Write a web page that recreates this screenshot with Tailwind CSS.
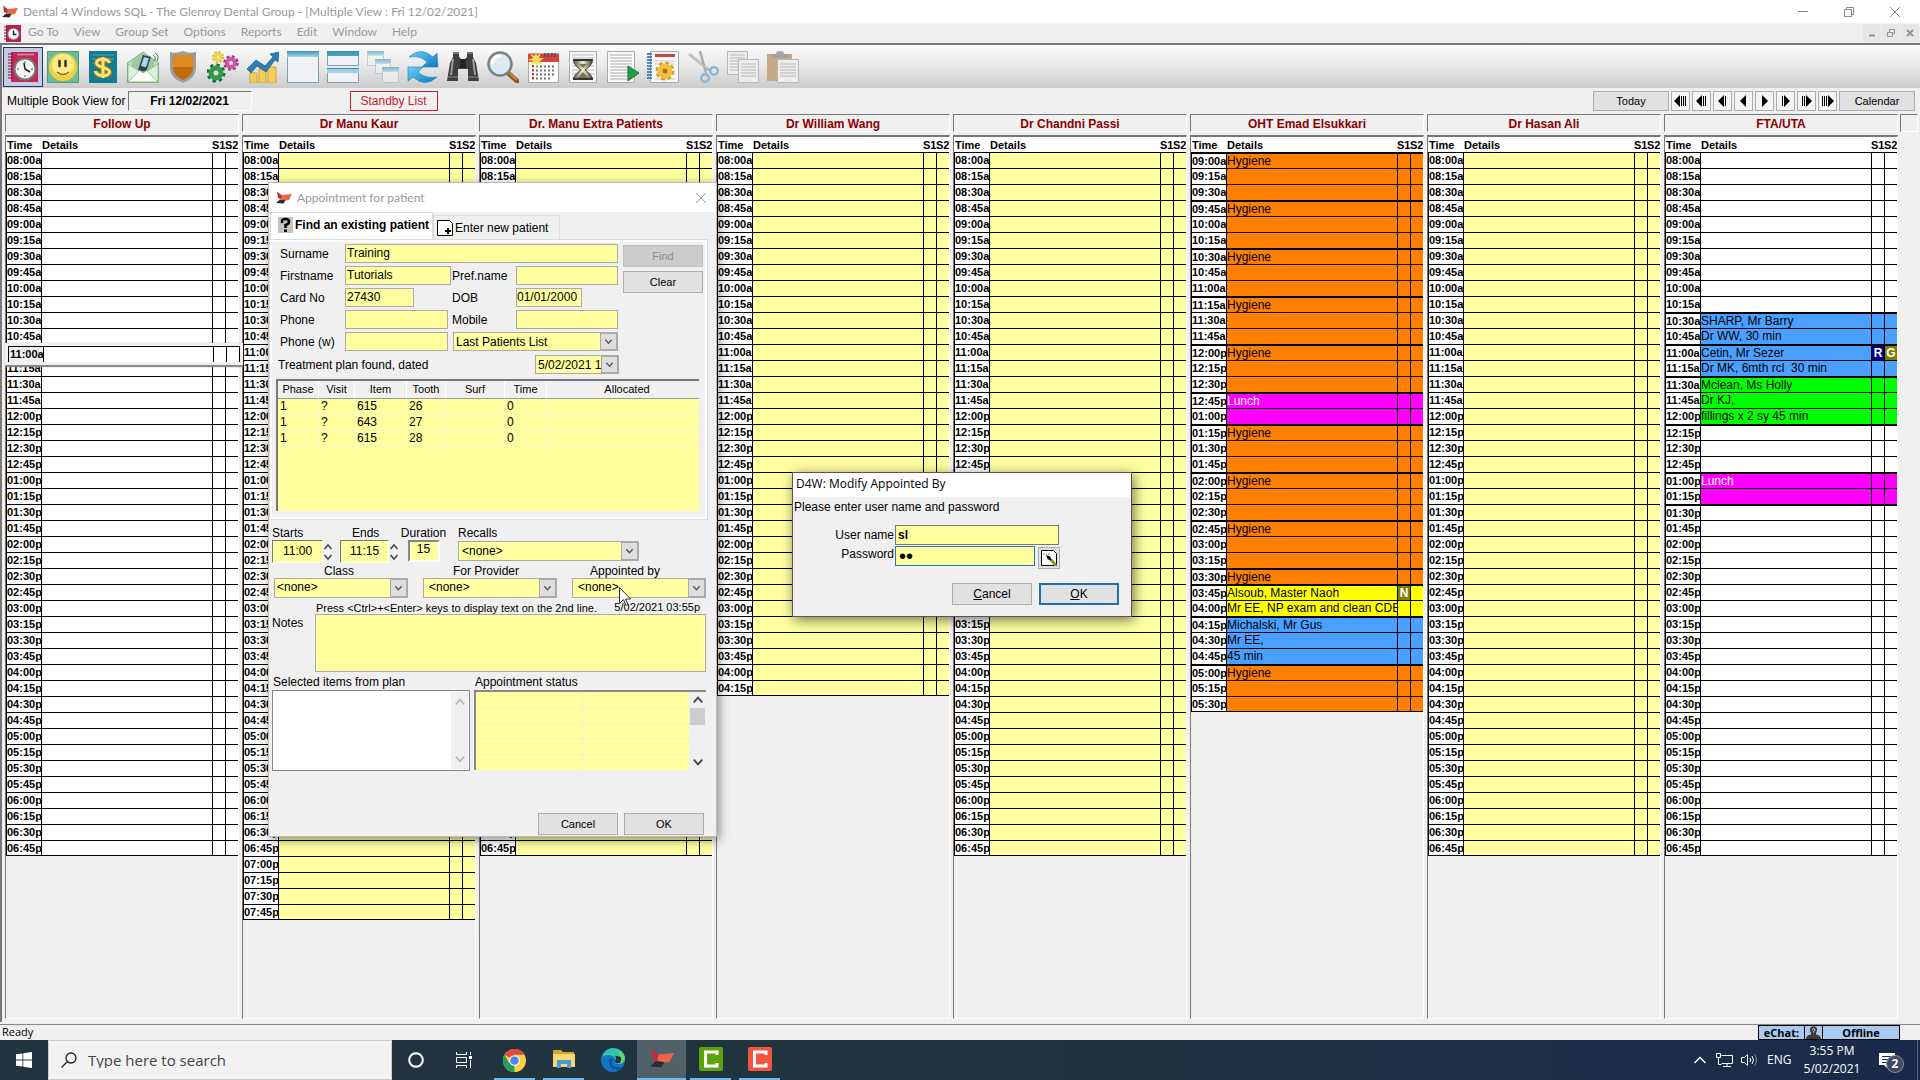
<!DOCTYPE html>
<html lang="en">

<head>
    <meta charset="UTF-8">
    <meta name="viewport" content="width=device-width, initial-scale=1.0">
    <title>Dental 4 Windows SQL</title>
    <script src="https://cdn.jsdelivr.net/npm/@tailwindcss/browser@4"></script>
</head>

<body class="h-screen flex flex-col overflow-hidden bg-[#f0f0f0] text-black text-[12px] leading-4 font-['Liberation_Sans',Arial,sans-serif]">

    <!-- shared symbols -->
    <svg class="absolute size-0">
        <symbol id="logo" viewBox="0 0 16 16">
            <path d="M1 1.500l5 4 0 4-4-1.500z" fill="#c8283c" />
            <path d="M5.500 5l10.500-1-3 6-4 .5-4-1.500z" fill="#e8694a" />
            <path d="M0 13l4-3.500 5.500.5-2 3.500z" fill="#2e2a2c" />
        </symbol>
        <symbol id="down" viewBox="0 0 10 10">
            <path d="M1.500 3l3.500 4 3.500-4" fill="none" stroke="currentColor" stroke-width="1.500" />
        </symbol>
        <symbol id="up" viewBox="0 0 10 10">
            <path d="M1.500 7l3.500-4 3.500 4" fill="none" stroke="currentColor" stroke-width="1.500" />
        </symbol>
        <symbol id="close" viewBox="0 0 12 12">
            <path d="M1 1l10 10M11 1l-10 10" fill="none" stroke="currentColor" />
        </symbol>
        <linearGradient id="blue" x1="0" y1="0" x2="0" y2="1">
            <stop offset="0" stop-color="#3a92b4" />
            <stop offset="1" stop-color="#a9d6e6" />
        </linearGradient>
        <linearGradient id="arrow" x1="0" y1="0" x2="1" y2="1">
            <stop offset="0" stop-color="#6fd0f5" />
            <stop offset="1" stop-color="#0f78c0" />
        </linearGradient>
        <linearGradient id="glass" x1="0" y1="0" x2="1" y2="0">
            <stop offset="0" stop-color="#555" />
            <stop offset=".5" stop-color="#f4f1c4" />
            <stop offset="1" stop-color="#444" />
        </linearGradient>
    </svg>

    <!-- title bar -->
    <header class="h-[23px] shrink-0 flex items-center bg-white pl-[2px] text-[#999] font-['Lato','Open_Sans',sans-serif]">
        <svg class="size-4"><use href="#logo" /></svg>
        <h1 class="ml-[5px] flex-1">Dental 4 Windows SQL - The Glenroy Dental Group - [Multiple View : Fri 12/02/2021]</h1>
        <div class="flex gap-[34px] pr-[19px] text-[#888]">
            <button aria-label="Minimize"><svg class="size-3" viewBox="0 0 12 12"><path d="M1 5.500h10" stroke="currentColor" /></svg></button>
            <button aria-label="Restore"><svg class="size-3" viewBox="0 0 12 12" fill="none" stroke="currentColor"><path d="M1.500 3.500h7v7h-7zM3.500 3.500v-2h7v7h-2" /></svg></button>
            <button aria-label="Close"><svg class="size-3"><use href="#close" /></svg></button>
        </div>
    </header>

    <nav class="h-5 shrink-0 flex items-center pl-1 text-[#999] font-['Lato','Open_Sans',sans-serif]">
        <svg class="size-[17px]" viewBox="0 0 17 17">
            <path d="M2 0h15v17h-15z" fill="#b5204e" />
            <path d="M0 2h3M0 5h3M0 8h3M0 11h3M0 14h3" stroke="#7a1436" />
            <circle cx="9.500" cy="9" r="6" fill="#999" />
            <circle cx="9.500" cy="9" r="5" fill="#fff" />
            <path d="M9.500 5.500v4h3" fill="none" stroke="#222" stroke-width="1.500" />
        </svg>
        <div class="flex flex-1 gap-[15px] pl-[7px] pb-[2px]">
            <a href="#">Go To</a>
            <a href="#">View</a>
            <a href="#">Group Set</a>
            <a href="#">Options</a>
            <a href="#">Reports</a>
            <a href="#">Edit</a>
            <a href="#">Window</a>
            <a href="#">Help</a>
        </div>
        <div class="flex gap-px pr-px text-[#8e93a5]">
            <button class="w-[18px] h-[18px] bg-[#e6e6e6] flex items-center justify-center" aria-label="Minimize book"><svg class="size-[10px]" viewBox="0 0 10 10"><path d="M2 7.500h6" stroke="currentColor" stroke-width="2" /></svg></button>
            <button class="w-[18px] h-[18px] bg-[#e6e6e6] flex items-center justify-center" aria-label="Restore book"><svg class="size-[10px]" viewBox="0 0 10 10" fill="none" stroke="currentColor"><path d="M1.500 4.500h5v4h-5zM1 4.500h6M3.500 4v-2.500h5v4h-2M3 1.500h6" /></svg></button>
            <button class="w-[18px] h-[18px] bg-[#e6e6e6] flex items-center justify-center" aria-label="Close book"><svg class="size-[10px]" viewBox="0 0 10 10"><path d="M2 2l6 6M8 2l-6 6" stroke="currentColor" stroke-width="2" /></svg></button>
        </div>
    </nav>

    <main class="relative flex-1 min-h-0 flex flex-col border-t-2 border-l-2 border-[#777]">
        <!-- toolbar -->
        <div class="h-[43px] shrink-0 flex items-center pl-px bg-linear-to-b from-[#fbfbfb] via-[#e8e8e8] to-[#cbcbcb]">
            <button class="size-10 flex items-center justify-center bg-[#c3cbe0] border border-[#26346e]" aria-label="Appointment book">
                <svg class="size-8" viewBox="0 0 32 32">
                    <path d="M4 1h27v30H4z" fill="#c2285c" />
                    <path d="M1 3h5M1 6h5M1 9h5M1 12h5M1 15h5M1 18h5M1 21h5M1 24h5M1 27h5" stroke="#7d1238" />
                    <path d="M10 3.500h17" stroke="#e58aa8" stroke-width="1.500" />
                    <circle cx="18" cy="18" r="11.500" fill="#777" />
                    <circle cx="18" cy="18" r="9.500" fill="#f4f4f4" />
                    <path d="M18 10v2M18 24v2M10 18h2M24 18h2" stroke="#555" />
                    <path d="M17 12l1 6 5 3" fill="none" stroke="#222" stroke-width="1.500" />
                </svg>
            </button>
            <button class="size-10 flex items-center justify-center" aria-label="Patients">
                <svg class="size-8" viewBox="0 0 32 32">
                    <path d="M.5.5h31v31H.500z" fill="#6dbd9b" stroke="#4f977b" />
                    <circle cx="16" cy="16" r="14" fill="#f2cf3c" />
                    <circle cx="16" cy="14" r="11" fill="#fbe88a" />
                    <path d="M12.500 10v5M18.500 10v5" stroke="#3c2f10" stroke-width="2.500" stroke-linecap="round" />
                    <path d="M10 21q6 5 12 0" fill="none" stroke="#8a6410" stroke-width="1.500" />
                </svg>
            </button>
            <button class="size-10 flex items-center justify-center" aria-label="Accounts">
                <svg class="size-8" viewBox="0 0 32 32">
                    <path d="M2 0h28v32H2z" fill="#117d92" />
                    <path d="M5 4h22M5 8h22M5 12h5" stroke="#4fa9b8" />
                    <path d="M22.500 12c-1-5-13-5-13 0s13 4 13 9-13 5-14-1M16 6v21" fill="none" stroke="#a67710" stroke-width="5" />
                    <path d="M22.500 12c-1-5-13-5-13 0s13 4 13 9-13 5-14-1M16 6v21" fill="none" stroke="#fbe37c" stroke-width="3" />
                </svg>
            </button>
            <button class="size-10 flex items-center justify-center" aria-label="Messages">
                <svg class="size-8" viewBox="0 0 32 32">
                    <path d="M.5 12L16 1l15.500 11v19.500H.500z" fill="#c2dfc1" stroke="#7cab80" />
                    <path d="M5 10l11-8 11 8v8l-11 6-11-6z" fill="#9fc6a4" />
                    <path d="M16 4l8 2-5 15-8-2z" fill="#37424a" />
                    <path d="M17 6l5 1.300-3 9-5-1.300z" fill="#a9d8ee" />
                    <path d="M1 31l11-12 4 3 4-3 11 12z" fill="#f7fcf6" stroke="#82b784" />
                    <path d="M1 13l11 7-11 11zM31 13l-11 7 11 11z" fill="#dbefd9" stroke="#82b784" stroke-width=".7" />
                    <path d="M26 4q4 2 1 6M28 2q5 3 2 8" fill="none" stroke="#2d8a4c" />
                </svg>
            </button>
            <button class="size-10 flex items-center justify-center" aria-label="Security">
                <svg class="size-8" viewBox="0 0 32 32">
                    <path d="M3 1q6 2 13-1 7 3 13 1v16q0 10-13 15Q3 27 3 17z" fill="#9a9da0" />
                    <path d="M6 4q5 1 10-1 5 2 10 1v13q0 7-10 12Q6 24 6 17z" fill="#dd8a22" />
                    <path d="M6 16h20v1q0 7-10 12Q6 24 6 17z" fill="#c06c0c" />
                </svg>
            </button>
            <button class="size-10 flex items-center justify-center" aria-label="Settings">
                <svg class="size-8" viewBox="0 0 32 32" fill="none">
                    <circle cx="11" cy="6" r="5" stroke="#d8b51c" stroke-width="2" stroke-dasharray="2.200 1.700" />
                    <circle cx="11" cy="6" r="3" stroke="#f0d440" stroke-width="3" />
                    <circle cx="24" cy="12" r="6.500" stroke="#a02f7c" stroke-width="2.500" stroke-dasharray="2.800 2.300" />
                    <circle cx="24" cy="12" r="4" stroke="#cb56a4" stroke-width="4" />
                    <circle cx="9" cy="22" r="8" stroke="#14692f" stroke-width="3" stroke-dasharray="3.300 3" />
                    <circle cx="9" cy="22" r="5" stroke="#2f9a4d" stroke-width="5" />
                </svg>
            </button>
            <button class="size-10 flex items-center justify-center" aria-label="Statistics">
                <svg class="size-8" viewBox="0 0 32 32">
                    <path d="M3 22h7v10H3zM12 18h7v14h-7zM21 16h8v16h-8z" fill="#f0cf57" stroke="#d2a52c" />
                    <path d="M0 18L9 9l9 6 8-9-3-3 9-2-1 10-3-2-9 12-9-6-6 7z" fill="#2f7fb4" stroke="#1d5b8a" stroke-width=".7" />
                </svg>
            </button>
            <button class="size-10 flex items-center justify-center" aria-label="Single window">
                <svg class="size-8" viewBox="0 0 32 32">
                    <path d="M.5.5h31v31H.500z" fill="#eff2f5" stroke="#7fa1b2" />
                    <path d="M0 0h32v6H0z" fill="url(#blue)" />
                </svg>
            </button>
            <button class="size-10 flex items-center justify-center" aria-label="Tile windows">
                <svg class="size-8" viewBox="0 0 32 32">
                    <path d="M.5.5h31v14H.500zM.5 17.500h31v14H.500z" fill="#eff2f5" stroke="#7fa1b2" />
                    <path d="M0 0h32v5H0zM0 17h32v5H0z" fill="url(#blue)" />
                    <path d="M0 17.500h32" stroke="#3a92b4" />
                </svg>
            </button>
            <button class="size-10 flex items-center justify-center opacity-60" aria-label="Cascade windows">
                <svg class="size-8" viewBox="0 0 32 32">
                    <path d="M.5.500h16v14H.500z" fill="#f3f5f7" stroke="#aab7be" />
                    <path d="M0 0h17v5H0z" fill="url(#blue)" />
                    <path d="M8.500 8.500h15v14h-15z" fill="#f3f5f7" stroke="#aab7be" />
                    <path d="M8 8h16v5H8z" fill="url(#blue)" />
                    <path d="M15.500 16.500h16v15h-16z" fill="#f3f5f7" stroke="#aab7be" />
                    <path d="M15 16h17v5H15z" fill="url(#blue)" />
                </svg>
            </button>
            <button class="size-10 flex items-center justify-center" aria-label="Refresh">
                <svg class="size-8" viewBox="0 0 32 32" fill="url(#arrow)" stroke="#1b7fbe" stroke-width=".6">
                    <path d="M2 6Q14-5 26 6l4-4 1 14H15l5-5Q13 4 2 6z" />
                    <path d="M30 26Q18 37 6 26l-5 4V16h15l-5 5q7 7 19 5z" />
                </svg>
            </button>
            <button class="size-10 flex items-center justify-center" aria-label="Find">
                <svg class="size-8" viewBox="0 0 32 32">
                    <path d="M6 2h6v4l3 3h2l3-3V2h6v4l3 6 3 18H21v-12h-10v12H0L3 12l3-6z" fill="#3f3f3f" />
                    <path d="M13 8h6v9h-6z" fill="#222" />
                    <path d="M6 8L4 24M26 8l2 16" stroke="#9b9b9b" stroke-width="2" />
                    <path d="M1 26h10M21 26h10" stroke="#888" />
                    <path d="M6 2h6M20 2h6" stroke="#777" stroke-width="2" />
                </svg>
            </button>
            <button class="size-10 flex items-center justify-center" aria-label="Zoom">
                <svg class="size-8" viewBox="0 0 32 32">
                    <path d="M21 22l9 8" stroke="#8a5a1c" stroke-width="5" stroke-linecap="round" />
                    <path d="M22 22l8 7" stroke="#c28e3d" stroke-width="2" />
                    <circle cx="13" cy="13" r="11.500" fill="#d9eaf3" stroke="#818181" stroke-width="2.500" />
                    <path d="M5 13q1-8 9-8" fill="none" stroke="#fff" stroke-width="3" />
                </svg>
            </button>
            <button class="size-10 flex items-center justify-center" aria-label="Calendar">
                <svg class="size-8" viewBox="0 0 32 32">
                    <path d="M1.500 2.500h30v29h-30z" fill="#fbfbfb" stroke="#aaa" />
                    <path d="M1 3h31v8H1z" fill="#d8453f" />
                    <path d="M18 2v4M21 2v4M25 2v4M28 2v4" stroke="#4a4a6a" stroke-width="1.500" />
                    <path d="M5 15.500h24M5 19.500h24M5 23.500h24M5 27.500h18" stroke="#777" stroke-width="2" stroke-dasharray="2 2" />
                    <path d="M6 14v15" stroke="#c33" stroke-width="2" stroke-dasharray="2 2" />
                    <path d="M9 0l1 5 4-3-2 5 5 0-4 3 3 4-5-2-1 4-2-4-5 3 3-5-5-1 5-2-3-4 5 2z" fill="#f8dc5c" />
                </svg>
            </button>
            <button class="size-10 flex items-center justify-center" aria-label="Waiting list">
                <svg class="size-8" viewBox="0 0 32 32">
                    <path d="M2.500.500h27v31h-27z" fill="#f7f7f7" stroke="#aaa" />
                    <path d="M5 4h22M5 7h22M5 11h22M5 15h22M5 19h22M5 23h22M5 27h22" stroke="#bbb" />
                    <path d="M7 9h18v3q-2 4-7 7 5 3 7 7v2H7v-2q2-4 7-7-5-3-7-7z" fill="url(#glass)" stroke="#444" />
                    <path d="M12 13h8l-4 4zM16 21l5 6H11z" fill="#77735a" />
                    <path d="M6 9h20M6 28h20" stroke="#333" stroke-width="2" />
                </svg>
            </button>
            <button class="size-10 flex items-center justify-center" aria-label="Run report">
                <svg class="size-8" viewBox="0 0 32 32">
                    <path d="M.5.500h27v31h-27z" fill="#fafafa" stroke="#aaa" />
                    <path d="M3 4h22M3 7h22M3 10h22M3 13h22M3 16h22M3 19h18M3 22h18M3 25h18M3 28h18" stroke="#aaa" />
                    <path d="M21 15l11 7-11 8z" fill="#21a04a" stroke="#147532" />
                </svg>
            </button>
            <button class="size-10 flex items-center justify-center" aria-label="Report settings">
                <svg class="size-8" viewBox="0 0 32 32">
                    <path d="M3.500.500h28v31h-28z" fill="#f7f7f7" stroke="#aaa" />
                    <path d="M8 4.500h20" stroke="#c9444a" stroke-width="3" />
                    <path d="M8 10h20M8 13h20M8 28h20" stroke="#ccc" />
                    <path d="M0 3h5M0 6h5M0 9h5M0 12h5M0 15h5M0 18h5M0 21h5M0 24h5M0 27h5" stroke="#1f6ea6" stroke-width="1.500" />
                    <circle cx="18" cy="20" r="8" fill="none" stroke="#d99a1c" stroke-width="3" stroke-dasharray="3.600 2.680" />
                    <circle cx="18" cy="20" r="5" fill="none" stroke="#f4c03c" stroke-width="5" />
                    <circle cx="18" cy="20" r="2.500" fill="#a8730f" />
                </svg>
            </button>
            <button class="size-10 flex items-center justify-center" aria-label="Cut">
                <svg class="size-8" viewBox="0 0 32 32" fill="none">
                    <path d="M2 3l20 16M13 0l6 22" stroke="#aaa" stroke-width="2.500" />
                    <path d="M2 3l19 15" stroke="#ddd" />
                    <circle cx="27" cy="20" r="3.800" stroke="#8ab8d2" stroke-width="2.500" />
                    <circle cx="18" cy="27" r="3.800" stroke="#8ab8d2" stroke-width="2.500" />
                </svg>
            </button>
            <button class="size-10 flex items-center justify-center" aria-label="Copy">
                <svg class="size-8" viewBox="0 0 32 32" stroke="#b8b8b8">
                    <path d="M.5.500h20v23H.500z" fill="#ececec" />
                    <path d="M3 4h15M3 7h15M3 10h15M3 13h15M3 16h15M3 19h8" />
                    <path d="M11.500 8.500h20v23h-20z" fill="#ececec" />
                    <path d="M14 13h15M14 16h15M14 19h15M14 22h15M14 25h15" />
                </svg>
            </button>
            <button class="size-10 flex items-center justify-center" aria-label="Paste">
                <svg class="size-8" viewBox="0 0 32 32">
                    <path d="M0 3h25v27H0z" fill="#c6a887" />
                    <path d="M5 3h4q0-3 4-3t4 3h4v4H5z" fill="#a5a5a5" />
                    <path d="M10.500 8.500h21v23h-21z" fill="#ececec" stroke="#b8b8b8" />
                    <path d="M13 13h16M13 16h16M13 19h16M13 22h16M13 25h16" stroke="#b8b8b8" />
                </svg>
            </button>
        </div>

        <!-- book bar -->
        <div class="h-[26px] shrink-0 flex items-center pl-[5px] pr-[5px] pb-px">
            <span>Multiple Book View for</span>
            <output class="ml-[2px] w-[124px] h-5 border border-[#777] border-r-white border-b-white text-center font-bold leading-[18px]">Fri 12/02/2021</output>
            <button class="ml-[98px] w-[88px] h-5 border border-[#c8202c] text-[#c8202c]">Standby List</button>
            <div id="nav" class="ml-auto flex gap-[2px] text-[11px]">
                <button class="w-[76px] h-5 bg-[#e1e1e1] border border-[#adadad]">Today</button>
                <button class="w-[76px] h-5 bg-[#e1e1e1] border border-[#adadad]">Calendar</button>
            </div>
        </div>

        <!-- books -->
        <div class="flex-1 min-h-0 flex pl-[2px] pb-[3px]">
            <div id="books" class="flex-1 grid grid-cols-8"></div>
            <div class="w-5 pr-[2px]">
                <div class="h-[18px] border border-[#777] border-r-white border-b-white"></div>
            </div>
        </div>

        <!-- row being dragged -->
        <div class="absolute left-[3px] top-[298px] w-[238px] h-6 bg-[#f0f0f0] border-b-2 border-[#888] pl-[3px] pr-[3px] pt-[3px] shadow-[0_0_1px_#999]">
            <div class="flex h-4 border border-b-0 border-black text-[11px] font-bold leading-[15px]">
                <span class="w-[35px] pl-px border-r border-black">11:00a</span>
                <span class="flex-1 bg-white border-r border-black"></span>
                <span class="w-[13px] bg-white border-r border-black"></span>
                <span class="w-3 bg-white"></span>
            </div>
        </div>

        <!-- appointment dialog -->
        <section class="absolute left-[266px] top-[137px] w-[449px] bg-[#f0f0f0] border border-[#bbb] shadow-[2px_3px_10px_rgba(0,0,0,0.45)] pb-px" aria-label="Appointment for patient">
            <div class="h-[29px] flex items-center bg-white pl-[7px] pr-[9px] text-[#999] font-['Lato','Open_Sans',sans-serif]">
                <svg class="size-4"><use href="#logo" /></svg>
                <h2 class="ml-[5px] flex-1">Appointment for patient</h2>
                <button aria-label="Close dialog"><svg class="size-3"><use href="#close" /></svg></button>
            </div>

            <div class="flex items-end h-7 pl-px">
                <button class="w-[163px] h-[28px] flex items-center bg-white border border-b-0 border-[#dcdcdc] pl-[7px] pb-1 font-bold whitespace-nowrap">
                    <svg class="w-[15px] h-4 bg-[#c3c3c3] mr-[2px]" viewBox="0 0 15 16">
                        <path d="M4 6V4q0-2 3.500-2T11 4.500 7.500 8v3" fill="none" stroke="#000" stroke-width="2.500" />
                        <path d="M6 12.500h3V15H6z" />
                    </svg>
                    Find an existing patient
                </button>
                <button class="w-[127px] h-[25px] flex items-center border border-b-0 border-[#dcdcdc] pl-[3px] pb-px whitespace-nowrap">
                    <svg class="size-4 mr-[2px]" viewBox="0 0 16 16">
                        <path d="M.500.500h12l3 3v12H.500z" fill="#fff" stroke="#000" />
                        <path d="M11 8v6M8 11h6" stroke="#000" stroke-width="2" />
                    </svg>
                    Enter new patient
                </button>
            </div>

            <form class="mx-px mr-[9px] border-2 border-white outline outline-[#dcdcdc] pl-[4px] pr-[2px] pt-[2px] pb-[6px]">
                <div class="flex items-start">
                    <div class="w-[345px] grid grid-cols-[65px_106px_65px_102px] gap-y-[3px] items-center pl-1">
                        <label for="surname">Surname</label>
                        <input id="surname" class="col-span-3 h-[19px] border border-[#aaa] bg-[#ffffa0] px-px pb-px leading-4" value="Training">
                        <label for="firstname">Firstname</label>
                        <input id="firstname" class="h-[19px] border border-[#aaa] bg-[#ffffa0] px-px pb-px leading-4" value="Tutorials">
                        <label for="pref" class="pl-px">Pref.name</label>
                        <input id="pref" class="h-[19px] border border-[#aaa] bg-[#ffffa0] px-px leading-4">
                        <label for="card">Card No</label>
                        <input id="card" class="w-[69px] h-[19px] border border-[#aaa] bg-[#ffffa0] px-px pb-px leading-4" value="27430">
                        <label for="dob" class="pl-px">DOB</label>
                        <input id="dob" class="w-[66px] h-[19px] border border-[#aaa] bg-[#ffffa0] pb-px leading-4" value="01/01/2000">
                        <label for="phone">Phone</label>
                        <input id="phone" class="w-[103px] h-[19px] border border-[#aaa] bg-[#ffffa0] px-px">
                        <label for="mobile" class="pl-px">Mobile</label>
                        <input id="mobile" class="h-[19px] border border-[#aaa] bg-[#ffffa0] px-px">
                        <label for="phonew">Phone (w)</label>
                        <input id="phonew" class="w-[103px] h-[19px] border border-[#aaa] bg-[#ffffa0] px-px">
                        <div class="col-span-2 ml-[2px] h-[19px] flex border border-[#aaa] bg-[#ffffa0]">
                            <select class="flex-1 appearance-none pl-[2px]" aria-label="Patients list"><option>Last Patients List</option></select>
                            <svg class="w-[17px] h-[17px] p-[3px] bg-[#dedede] border border-[#aaa] text-[#555]"><use href="#down" /></svg>
                        </div>
                    </div>
                    <div class="flex-1 flex flex-col gap-1 pl-[3px] pt-px text-[11px]">
                        <button type="button" class="h-[22px] w-20 bg-[#cccccc] border border-[#bfbfbf] text-[#8b8b8b]" disabled>Find</button>
                        <button type="button" class="h-[22px] w-20 bg-[#e1e1e1] border border-[#adadad]">Clear</button>
                    </div>
                </div>
                <div class="flex items-center justify-between pl-[2px] pr-[84px] mt-1">
                    <label for="plan">Treatment plan found, dated</label>
                    <div class="w-[84px] h-[19px] flex border border-[#aaa] bg-[#ffffa0]">
                        <select id="plan" class="w-[65px] appearance-none pl-[2px] overflow-hidden"><option>5/02/2021 10:15a</option></select>
                        <svg class="w-[17px] h-[17px] p-[3px] bg-[#dedede] border border-[#aaa] text-[#555]"><use href="#down" /></svg>
                    </div>
                </div>
                <div class="mt-[5px] mr-[4px] h-[132px] bg-[#ffffa0] border-t-2 border-l-2 border-[#777]">
                    <table class="w-full table-fixed border-separate border-spacing-0 leading-[15px]">
                        <thead class="text-[11px]">
                            <tr class="h-[18px] bg-[#f0f0f0]">
                                <th class="w-[41px] p-0 font-normal border-b border-r border-b-[#999] border-r-white">Phase</th>
                                <th class="w-[36px] p-0 font-normal border-b border-r border-b-[#999] border-r-white">Visit</th>
                                <th class="w-[52px] p-0 font-normal border-b border-r border-b-[#999] border-r-white">Item</th>
                                <th class="w-[39px] p-0 font-normal border-b border-r border-b-[#999] border-r-white">Tooth</th>
                                <th class="w-[59px] p-0 font-normal border-b border-r border-b-[#999] border-r-white">Surf</th>
                                <th class="w-[42px] p-0 font-normal border-b border-r border-b-[#999] border-r-white">Time</th>
                                <th class="p-0 font-normal border-b border-b-[#999] pl-2">Allocated</th>
                            </tr>
                        </thead>
                        <tbody id="planRows"></tbody>
                    </table>
                </div>
            </form>

            <form class="pl-[3px] pr-[10px] pt-[6px]">
                <div class="flex items-start">
                    <div class="w-[68px]">
                        <label for="starts" class="block h-[15px]">Starts</label>
                        <div class="flex">
                            <input id="starts" class="w-[51px] h-[23px] border border-[#777] border-r-white border-b-white bg-[#ffffa0] text-center pb-px" value="11:00">
                            <div class="flex flex-col justify-between py-[2px] text-[#444]">
                                <button type="button" aria-label="Start later"><svg class="size-[10px]"><use href="#up" /></svg></button>
                                <button type="button" aria-label="Start earlier"><svg class="size-[10px]"><use href="#down" /></svg></button>
                            </div>
                        </div>
                    </div>
                    <div class="w-[67px]">
                        <label for="ends" class="block h-[15px] pl-3">Ends</label>
                        <div class="flex">
                            <input id="ends" class="w-[49px] h-[23px] border border-[#777] border-r-white border-b-white bg-[#ffffa0] text-center pb-px" value="11:15">
                            <div class="flex flex-col justify-between py-[2px] text-[#444]">
                                <button type="button" aria-label="End later"><svg class="size-[10px]"><use href="#up" /></svg></button>
                                <button type="button" aria-label="End earlier"><svg class="size-[10px]"><use href="#down" /></svg></button>
                            </div>
                        </div>
                    </div>
                    <div class="w-[51px] text-center -ml-[9px]">
                        <label for="duration" class="block h-[15px]">Duration</label>
                        <input id="duration" class="w-8 h-[22px] border-2 border-[#888] border-r-white border-b-white bg-[#ffffa0] text-center pb-1" value="15">
                    </div>
                    <div class="ml-[9px]">
                        <label for="recalls" class="block h-4">Recalls</label>
                        <div class="w-[181px] h-5 flex border border-[#aaa] bg-[#ffffa0]">
                            <select id="recalls" class="flex-1 appearance-none pl-[3px]"><option>&lt;none&gt;</option></select>
                            <svg class="w-[17px] h-[18px] p-[3px] bg-[#dedede] border border-[#aaa] text-[#555]"><use href="#down" /></svg>
                        </div>
                    </div>
                </div>
                <div class="flex justify-between pl-[2px] -mt-px">
                    <div class="w-[134px]">
                        <label for="class" class="block h-[15px] text-center pr-1">Class</label>
                        <div class="h-5 flex border border-[#aaa] bg-[#ffffa0]">
                            <select id="class" class="flex-1 appearance-none pl-[2px] pb-[2px]"><option>&lt;none&gt;</option></select>
                            <svg class="w-[17px] h-[18px] p-[3px] bg-[#dedede] border border-[#aaa] text-[#555]"><use href="#down" /></svg>
                        </div>
                    </div>
                    <div class="w-[134px]">
                        <label for="provider" class="block h-[15px] text-center pr-2">For Provider</label>
                        <div class="h-5 flex border border-[#aaa] bg-[#ffffa0]">
                            <select id="provider" class="flex-1 appearance-none pl-[5px] pb-[2px]"><option>&lt;none&gt;</option></select>
                            <svg class="w-[17px] h-[18px] p-[3px] bg-[#dedede] border border-[#aaa] text-[#555]"><use href="#down" /></svg>
                        </div>
                    </div>
                    <div class="w-[134px]">
                        <label for="appointed" class="block h-[15px] text-center pr-7">Appointed by</label>
                        <div class="h-5 flex border border-[#aaa] bg-[#ffffa0]">
                            <select id="appointed" class="flex-1 appearance-none pl-[5px] pb-[2px]"><option>&lt;none&gt;</option></select>
                            <svg class="w-[17px] h-[18px] p-[3px] bg-[#dedede] border border-[#aaa] text-[#555]"><use href="#down" /></svg>
                        </div>
                    </div>
                </div>
                <div class="flex justify-between pl-11 pr-[6px] text-[11px]">
                    <span class="pt-[2px]">Press &lt;Ctrl&gt;+&lt;Enter&gt; keys to display text on the 2nd line.</span>
                    <span class="pt-px">5/02/2021 03:55p</span>
                </div>
                <div class="flex -mt-px">
                    <label for="notes" class="w-[43px]">Notes</label>
                    <textarea id="notes" class="flex-1 h-[58px] -mt-px resize-none border border-[#aaa] bg-[#ffffa0]"></textarea>
                </div>
                <div class="flex gap-1 pt-[2px]">
                    <div class="w-[198px]">
                        <h3 class="pl-px h-4">Selected items from plan</h3>
                        <div class="h-[81px] flex border border-[#828790] bg-white">
                            <div class="ml-auto m-px w-[17px] flex flex-col items-center justify-between py-1 bg-[#f0f0f0] text-[#bbb]">
                                <svg class="size-3"><use href="#up" /></svg>
                                <svg class="size-3"><use href="#down" /></svg>
                            </div>
                        </div>
                    </div>
                    <div class="flex-1">
                        <h3 class="pl-px h-4">Appointment status</h3>
                        <div class="h-[80px] flex border-t-2 border-l-2 border-[#888]">
                            <div class="flex-1 grid grid-cols-2 grid-rows-5 gap-px bg-[#f6f3c0]">
                                <span class="bg-[#ffffa0]"></span><span class="bg-[#ffffa0]"></span>
                                <span class="bg-[#ffffa0]"></span><span class="bg-[#ffffa0]"></span>
                                <span class="bg-[#ffffa0]"></span><span class="bg-[#ffffa0]"></span>
                                <span class="bg-[#ffffa0]"></span><span class="bg-[#ffffa0]"></span>
                                <span class="bg-[#ffffa0]"></span><span class="bg-[#ffffa0]"></span>
                            </div>
                            <div class="w-[17px] flex flex-col items-center py-[2px] text-[#444]">
                                <svg class="size-3"><use href="#up" /></svg>
                                <div class="w-[15px] h-[17px] mt-[2px] mb-auto bg-[#cdcdcd]"></div>
                                <svg class="size-3"><use href="#down" /></svg>
                            </div>
                        </div>
                    </div>
                </div>
                <div class="flex justify-end gap-[6px] pt-[42px] pr-[2px] text-[11px]">
                    <button type="button" class="w-20 h-[22px] bg-[#e1e1e1] border border-[#adadad]">Cancel</button>
                    <button type="button" class="w-20 h-[22px] bg-[#e1e1e1] border border-[#adadad]">OK</button>
                </div>
            </form>
        </section>

        <!-- mouse pointer -->
        <svg class="absolute left-[617px] top-[542px] w-3 h-[19px]" viewBox="0 0 12 19">
            <path d="M.500.500v16l4-4 2.500 6 2-1-2.500-5.500h5z" fill="#fff" stroke="#333" />
        </svg>

        <!-- login dialog -->
        <section class="absolute left-[790px] top-[427px] w-[340px] h-[145px] bg-[#f0f0f0] border border-[#555] shadow-[2px_3px_12px_rgba(0,0,0,0.55)]" aria-label="Modify Appointed By">
            <h2 class="h-6 bg-white pl-[3px] leading-[22px] font-['Open_Sans','Noto_Sans',sans-serif]">D4W: Modify Appointed By</h2>
            <p class="pl-px pt-[2px]">Please enter user name and password</p>
            <form>
                <div class="grid grid-cols-[101px_1fr] gap-x-px gap-y-px mt-[10px]">
                    <label for="user" class="text-right pt-[2px]">User name</label>
                    <input id="user" class="w-[164px] h-5 border border-[#777] bg-[#ffffa0] px-[2px] font-bold" value="sl">
                    <label for="pass" class="text-right">Password</label>
                    <div class="flex items-start gap-[3px]">
                        <input id="pass" type="password" class="w-[140px] h-5 border border-[#2a74b8] bg-[#ffffa0] px-[3px] text-[20px] leading-4" value="aa">
                        <button type="button" class="size-[22px] mt-px flex items-center justify-center bg-[#e1e1e1] border border-[#adadad]" aria-label="Change password">
                            <svg class="size-4" viewBox="0 0 16 16">
                                <path d="M.500.500h12l3 3v12H.500z" fill="#fff" stroke="#000" />
                                <path d="M2 4h2M5 4h1M7 4h2" stroke="#777" />
                                <path d="M5 5l5 2-3 3z" fill="#000" />
                                <path d="M8 8l3 3" stroke="#000" stroke-width="2" />
                                <path d="M10 10l5 5.500" stroke="#99952c" stroke-width="3" />
                            </svg>
                        </button>
                    </div>
                </div>
                <div class="flex justify-end gap-[7px] pt-[14px] pr-[12px]">
                    <button type="button" class="w-20 h-[22px] bg-[#e1e1e1] border border-[#adadad]"><u>C</u>ancel</button>
                    <button type="button" class="w-20 h-[22px] bg-[#e1e1e1] border-2 border-[#1f6fb2]"><u>O</u>K</button>
                </div>
            </form>
        </section>
    </main>

    <!-- status bar -->
    <footer class="shrink-0">
        <div class="h-4 mt-[2px] flex items-stretch border-t border-[#888] font-['Open_Sans','Noto_Sans',sans-serif] text-[11px] leading-[14px]">
            <span class="pl-[2px] flex-1">Ready</span>
            <div class="flex w-[142px] mr-5 bg-[#a9cbf1] border border-black font-bold leading-[13px] text-center">
                <span class="w-[46px] border-r border-black">eChat:</span>
                <svg class="w-[17px] h-[13px]" viewBox="0 0 17 13">
                    <path d="M1 13q0-4 5-4.500V7Q4 4 5.500 1.500q3-2.500 6 0Q13 4 11 7v1.500q5 .500 5 4.500z" fill="#3b3b3b" />
                    <path d="M7 3.500q1.500-1.500 3 0 0 1.500-1.500 2v1" stroke="#ddd" fill="none" />
                </svg>
                <span class="flex-1 border-l border-black">Offline</span>
            </div>
        </div>
        <!-- taskbar -->
        <div class="h-10 flex items-stretch bg-linear-to-r from-[#22353f] via-[#203440] to-[#192a4a] text-white font-['Open_Sans','Noto_Sans',sans-serif]">
            <button class="w-12 flex items-center justify-center" aria-label="Start">
                <svg class="size-4" viewBox="0 0 16 16" fill="#fff"><path d="M0 2.300l6.500-.9v6.200H0zM7.300 1.300L16 0v7.600H7.300zM0 8.400h6.500v6.200L0 13.700zM7.300 8.400H16V16l-8.700-1.300z" /></svg>
            </button>
            <label class="w-[344px] flex items-center bg-[#f2f2f2] border border-[#ccc] text-[#444] pl-[12px]">
                <svg class="size-4" viewBox="0 0 16 16" fill="none" stroke="#222" stroke-width="1.300"><circle cx="10" cy="6" r="5" /><path d="M6.500 9.500L.5 15.500" /></svg>
                <input class="ml-[11px] flex-1 text-[15px] placeholder:text-[#444] outline-none" placeholder="Type here to search" aria-label="Search">
            </label>
            <button class="w-12 flex items-center justify-center" aria-label="Cortana">
                <svg class="size-4" viewBox="0 0 16 16"><circle cx="8" cy="8" r="6.800" fill="none" stroke="#fff" stroke-width="2" /></svg>
            </button>
            <button class="w-12 flex items-center justify-center" aria-label="Task view">
                <svg class="size-4" viewBox="0 0 16 16" fill="none" stroke="#fff"><path d="M.500 0v2.500h10V0M.500 5.500h10v5h-10zM.500 16v-2.500h10V16M14.500 0v3M14.500 8v8" /><path d="M13 4h3v3h-3z" fill="#fff" stroke="none" /></svg>
            </button>
            <div class="ml-[2px] flex">
                <button class="w-[49px] flex justify-center items-center px-1" aria-label="Chrome">
                    <span class="w-full h-10 flex items-center justify-center border-b-2 border-[#76b9ed]">
                        <svg class="size-[23px] mt-[2px]" viewBox="0 0 24 24">
                            <circle cx="12" cy="12" r="12" fill="#ffcd40" />
                            <path d="M12 12L1.600 6A12 12 0 0 1 22.400 6H12z" fill="#de4b3c" />
                            <path d="M1.600 6l5.200 9 5 2.500L12 24A12 12 0 0 1 1.600 6z" fill="#1da15f" />
                            <circle cx="12" cy="12" r="5.600" fill="#fff" />
                            <circle cx="12" cy="12" r="4.500" fill="#4a86f0" />
                        </svg>
                    </span>
                </button>
                <button class="w-[49px] flex justify-center items-center px-1" aria-label="File Explorer">
                    <span class="w-full h-10 flex items-center justify-center border-b-2 border-[#76b9ed]">
                        <svg class="size-[22px]" viewBox="0 0 22 22">
                            <path d="M0 2h8l2 2h11v4H0z" fill="#d9a32c" />
                            <path d="M0 6h22v13H0z" fill="#f8d775" />
                            <path d="M4 20v-8h14v8h-4v-4H8v4z" fill="#4a9ad4" />
                        </svg>
                    </span>
                </button>
                <button class="w-[49px] flex justify-center items-center" aria-label="Edge">
                    <svg class="size-[24px]" viewBox="0 0 24 24">
                        <circle cx="12" cy="12" r="12" fill="#1473c4" />
                        <path d="M1 9Q4 0 13 0q9 1 11 9 0 6-6 7-5 0-4-3 1-2-1-4-5-4-12 0z" fill="#35c1b0" />
                        <path d="M17 2q7 3 7 9-1 5-7 5l2-6z" fill="#64d46b" />
                        <path d="M8 13q0 8 8 9 3 0 6-3-8 2-11-3-1-3 1-5-4-1-4 2z" fill="#0c4f9e" />
                        <path d="M14 13q2-3 0-5 9-1 5 7-5 1-5-2z" fill="#22353f" />
                    </svg>
                </button>
                <button class="w-[49px] flex justify-center items-center bg-[#50616a] border-b-2 border-[#76b9ed]" aria-label="Dental 4 Windows">
                    <svg class="size-6"><use href="#logo" /></svg>
                </button>
                <button class="w-[49px] flex justify-center items-center px-1" aria-label="Camtasia">
                    <span class="w-full h-10 flex items-center justify-center border-b-2 border-[#76b9ed]">
                        <svg class="size-6" viewBox="0 0 24 24"><rect width="24" height="24" rx="2" fill="#5fa30c" /><path d="M18 8V5H6.500v14H18v-3" fill="none" stroke="#fff" stroke-width="3" /></svg>
                    </span>
                </button>
                <button class="w-[49px] flex justify-center items-center px-1" aria-label="Camtasia Recorder">
                    <span class="w-full h-10 flex items-center justify-center border-b-2 border-[#76b9ed]">
                        <svg class="size-6" viewBox="0 0 24 24"><rect width="24" height="24" rx="2" fill="#f4553f" /><path d="M18 8V5H6.500v14H18v-3" fill="none" stroke="#fff" stroke-width="3" /></svg>
                    </span>
                </button>
            </div>
            <div class="ml-auto flex items-center">
                <svg class="w-3 h-2 mr-[10px]" viewBox="0 0 12 8" fill="none" stroke="#fff" stroke-width="1.300"><path d="M.500 7L6 1.500 11.500 7" /></svg>
                <svg class="w-[17px] h-4 mr-[8px]" viewBox="0 0 17 16" fill="none" stroke="#fff"><path d="M5.500 3.500h11v8h-11M11 11.500v3M7 14.500h8M.500 1.500h4v4h-4zM2.500 5.500v7h3" /></svg>
                <svg class="w-[17px] h-4 mr-[9px]" viewBox="0 0 17 16" fill="none" stroke="#fff"><path d="M.500 5.500h3l3-3v11l-3-3h-3zM9 6q1.500 2 0 4M11 4q3 4 0 8" /><path d="M13.500 2.500q4 5.500 0 11" stroke="#8794a5" /></svg>
                <span class="w-[34px]">ENG</span>
                <div class="w-[62px] text-center leading-[18px]">
                    <div>3:55 PM</div>
                    <div>5/02/2021</div>
                </div>
                <button class="ml-4 relative w-[26px] h-6" aria-label="Notifications">
                    <svg class="w-4 h-4 block" viewBox="0 0 16 16"><path d="M0 1h16v12H8v3l-3-3H0z" fill="#fff" /><path d="M3 4.500h10M3 7.500h10M3 10.500h7" stroke="#1b2c48" /></svg>
                    <span class="absolute left-2 top-2 size-4 rounded-full bg-[#3d4a61] ring-1 ring-[#8a93a3] leading-4 text-[12px] font-bold text-center">2</span>
                </button>
                <span class="ml-3 mr-[2px] h-10 border-l border-[#5b6880]"></span>
            </div>
        </div>
    </footer>

    <script>
        // fill: cell colour of free slots, start: first slot in minutes
        const books = [
            { name: 'Follow Up', start: 480, rows: 44, fill: 'bg-white', appts: [] },
            { name: 'Dr Manu Kaur', start: 480, rows: 48, fill: 'bg-[#ffffa0]', appts: [] },
            { name: 'Dr. Manu Extra Patients', start: 480, rows: 44, fill: 'bg-[#ffffa0]', appts: [] },
            { name: 'Dr William Wang', start: 480, rows: 34, fill: 'bg-[#ffffa0]', appts: [] },
            { name: 'Dr Chandni Passi', start: 480, rows: 44, fill: 'bg-[#ffffa0]', appts: [] },
            {
                name: 'OHT Emad Elsukkari', start: 540, rows: 35, fill: 'bg-white', appts: [
                    { at: 0, fill: 'bg-[#ff8000]', lines: ['Hygiene', '', ''] },
                    { at: 3, fill: 'bg-[#ff8000]', lines: ['Hygiene', '', ''] },
                    { at: 6, fill: 'bg-[#ff8000]', lines: ['Hygiene', '', ''] },
                    { at: 9, fill: 'bg-[#ff8000]', lines: ['Hygiene', '', ''] },
                    { at: 12, fill: 'bg-[#ff8000]', lines: ['Hygiene', '', ''] },
                    { at: 15, fill: 'bg-[#ff00ff] text-white', lines: ['Lunch', ''] },
                    { at: 17, fill: 'bg-[#ff8000]', lines: ['Hygiene', '', ''] },
                    { at: 20, fill: 'bg-[#ff8000]', lines: ['Hygiene', '', ''] },
                    { at: 23, fill: 'bg-[#ff8000]', lines: ['Hygiene', '', ''] },
                    { at: 26, fill: 'bg-[#ff8000]', lines: ['Hygiene'] },
                    { at: 27, fill: 'bg-[#ffff00]', lines: ['Alsoub, Master Naoh', 'Mr EE, NP exam and clean CDE'], s1: ['N', 'bg-[#808000]'] },
                    { at: 29, fill: 'bg-[#4aa0ff]', lines: ['Michalski, Mr Gus', 'Mr EE,', '45 min'] },
                    { at: 32, fill: 'bg-[#ff8000]', lines: ['Hygiene', '', ''] },
                ]
            },
            { name: 'Dr Hasan Ali', start: 480, rows: 44, fill: 'bg-[#ffffa0]', appts: [] },
            {
                name: 'FTA/UTA', start: 480, rows: 44, fill: 'bg-white', appts: [
                    { at: 10, fill: 'bg-[#4aa0ff]', lines: ['SHARP, Mr Barry', 'Dr WW, 30 min'] },
                    { at: 12, fill: 'bg-[#4aa0ff]', lines: ['Cetin, Mr Sezer', 'Dr MK, 6mth rcl  30 min'], s1: ['R', 'bg-[#000080]'], s2: ['G', 'bg-[#808000]'] },
                    { at: 14, fill: 'bg-[#00ff00]', lines: ['Mclean, Ms Holly', 'Dr KJ,', 'fillings x 2 sy 45 min'] },
                    { at: 20, fill: 'bg-[#ff00ff] text-white', lines: ['Lunch', ''] },
                ]
            },
        ];

        function slotTime(mins) {
            const h = Math.floor(mins / 60);
            const h12 = h > 12 ? h - 12 : h;
            return String(h12).padStart(2, '0') + ':' + String(mins % 60).padStart(2, '0') + (h < 12 ? 'a' : 'p');
        }

        function flag(f) {
            return f ? `<span class="block h-[14px] ${f[1]} text-white font-bold text-center leading-[14px]">${f[0]}</span>` : '';
        }

        function bookRows(book) {
            let html = '';
            for (let i = 0; i < book.rows; i++) {
                const appt = book.appts.find(a => i >= a.at && i < a.at + a.lines.length);
                const edge = book.appts.some(a => i === a.at || i === a.at + a.lines.length);
                const first = appt && appt.at === i;
                const cell = `h-4 p-0 align-top overflow-hidden whitespace-pre border-l border-black ${edge ? 'border-t-2' : 'border-t'} ${i === book.rows - 1 ? 'border-b' : ''}`;
                const fill = appt ? appt.fill : book.fill;
                html += `<tr class="h-4">
                    <th class="${cell} bg-white text-left text-[11px] font-bold">${slotTime(book.start + i * 15)}</th>
                    <td class="${cell} ${fill}">${appt ? appt.lines[i - appt.at] : ''}</td>
                    <td class="${cell} ${fill}">${first ? flag(appt.s1) : ''}</td>
                    <td class="${cell} ${fill}">${first ? flag(appt.s2) : ''}</td>
                </tr>`;
            }
            return html;
        }

        document.getElementById('books').innerHTML = books.map(book => `
            <section class="flex flex-col pl-px pr-[2px] min-w-0">
                <h2 class="h-[18px] shrink-0 border border-[#777] border-r-white border-b-white text-center font-bold leading-[18px] text-[#8b0000]">${book.name}</h2>
                <div class="mt-[3px] flex-1 min-h-0 overflow-hidden border border-t-2 border-[#777] border-r-white border-b-white">
                    <table class="w-full table-fixed border-separate border-spacing-0 leading-[14px]">
                        <thead>
                            <tr class="h-[15px] bg-white text-[11px] text-left">
                                <th class="w-[35px] p-0 pl-px">Time</th>
                                <th class="p-0 pl-px">Details</th>
                                <th class="w-[13px] p-0">S1</th>
                                <th class="w-[13px] p-0">S2</th>
                            </tr>
                        </thead>
                        <tbody>${bookRows(book)}</tbody>
                    </table>
                </div>
            </section>`).join('');

        // three bars = month, two = week, one = several days, none = one day
        const steps = [['left', 3], ['left', 2], ['left', 1], ['left', 0], ['right', 0], ['right', 1], ['right', 2], ['right', 3]];
        const calendar = document.getElementById('nav').lastElementChild;
        steps.forEach(([dir, bars]) => {
            const w = 6 + bars * 2;
            const x = (17 - w) / 2 | 0;
            let d = `M${x + 6} 3v12l-6-6z`;
            for (let b = 0; b < bars; b++) d += `M${x + 7 + b * 2} 4h1v10h-1z`;
            calendar.insertAdjacentHTML('beforebegin', `
                <button class="w-[19px] h-5 bg-[#f4f4f4] border border-[#adadad]" aria-label="${dir} ${bars}">
                    <svg class="w-[17px] h-[18px]" viewBox="0 0 17 18"><path d="${d}" ${dir === 'right' ? 'transform="matrix(-1 0 0 1 17 0)"' : ''} /></svg>
                </button>`);
        });

        const plan = [['1', '?', '615', '26', '', '0', ''], ['1', '?', '643', '27', '', '0', ''], ['1', '?', '615', '28', '', '0', '']];
        document.getElementById('planRows').innerHTML = plan.map(row =>
            '<tr class="h-4">' + row.map(v => `<td class="p-0 pl-[2px] border-b border-r border-[#f8f5c0]">${v}</td>`).join('') + '</tr>').join('');
    </script>

</body>

</html>
